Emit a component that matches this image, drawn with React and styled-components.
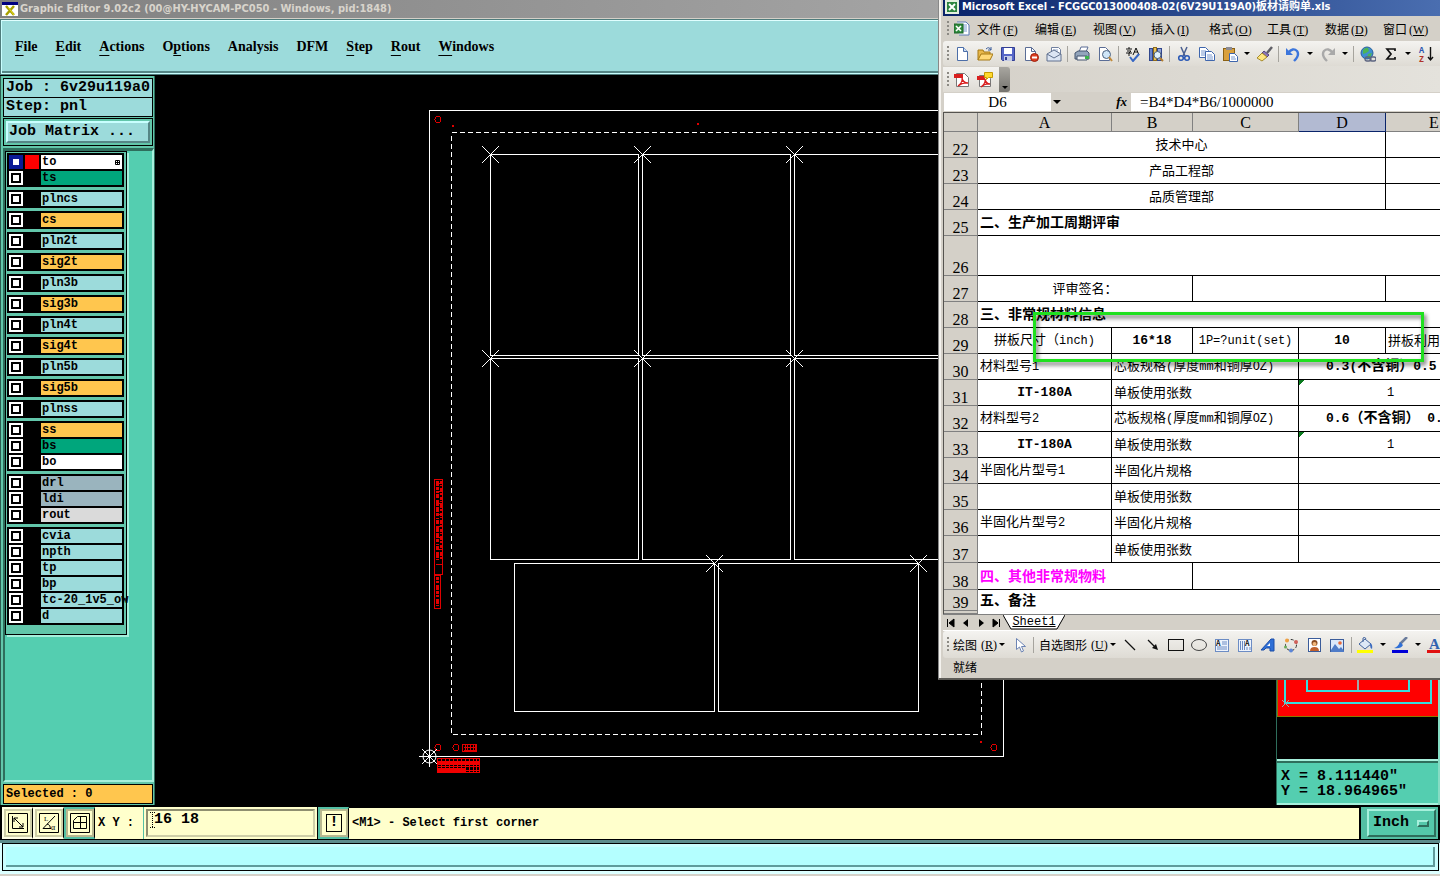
import React, { useState } from 'react';
import styled, { createGlobalStyle, css } from 'styled-components';

const MONO = '"Liberation Mono", "Noto Sans CJK SC", monospace';
const SERIF = '"Liberation Serif", "Noto Sans CJK SC", serif';
const CAPTION = '"DejaVu Sans Condensed", "DejaVu Sans", "Noto Sans CJK SC", sans-serif';
const CJK = '"Noto Sans CJK SC", sans-serif';

const MENUS = [
  { before: '', key: 'F', after: 'ile' },
  { before: '', key: 'E', after: 'dit' },
  { before: '', key: 'A', after: 'ctions' },
  { before: 'O', key: 'p', after: 'tions' },
  { before: 'Analysis', key: '', after: '' },
  { before: 'DFM', key: '', after: '' },
  { before: '', key: 'S', after: 'tep' },
  { before: '', key: 'R', after: 'out' },
  { before: '', key: 'W', after: 'indows' }
];

const AQUA = '#9cdbdb';
const AMBER = '#ffc64e';
const JADE = '#00a67c';
const STEEL = '#9ab4be';

const LAYER_GROUPS = [
  [{ name: 'to', color: '#fff', active: true }, { name: 'ts', color: JADE }],
  [{ name: 'plncs', color: AQUA }],
  [{ name: 'cs', color: AMBER }],
  [{ name: 'pln2t', color: AQUA }],
  [{ name: 'sig2t', color: AMBER }],
  [{ name: 'pln3b', color: AQUA }],
  [{ name: 'sig3b', color: AMBER }],
  [{ name: 'pln4t', color: AQUA }],
  [{ name: 'sig4t', color: AMBER }],
  [{ name: 'pln5b', color: AQUA }],
  [{ name: 'sig5b', color: AMBER }],
  [{ name: 'plnss', color: AQUA }],
  [
    { name: 'ss', color: AMBER },
    { name: 'bs', color: JADE },
    { name: 'bo', color: '#fff' }
  ],
  [
    { name: 'drl', color: STEEL },
    { name: 'ldi', color: STEEL },
    { name: 'rout', color: '#dadada' }
  ],
  [
    { name: 'cvia', color: AQUA },
    { name: 'npth', color: AQUA },
    { name: 'tp', color: AQUA },
    { name: 'bp', color: AQUA },
    { name: 'tc-20_1v5_ow', color: AQUA },
    { name: 'd', color: AQUA }
  ]
];

const EXCEL_MENUS = [
  ['文件', 'F'], ['编辑', 'E'], ['视图', 'V'], ['插入', 'I'],
  ['格式', 'O'], ['工具', 'T'], ['数据', 'D'], ['窗口', 'W']
];

const ROWS = [
  { n: 22, h: 26, cells: [{ span: 4, text: '技术中心', center: true }, {}] },
  { n: 23, h: 26, cells: [{ span: 4, text: '产品工程部', center: true }, {}] },
  { n: 24, h: 26, cells: [{ span: 4, text: '品质管理部', center: true }, {}] },
  { n: 25, h: 26, cells: [{ span: 5, text: '二、生产加工周期评审', bold: true }] },
  { n: 26, h: 40, cells: [{ span: 5 }] },
  { n: 27, h: 26, cells: [{ span: 2, text: '评审签名：', center: true }, { span: 2 }, {}] },
  { n: 28, h: 26, cells: [{ span: 5, text: '三、非常规材料信息', bold: true }] },
  {
    n: 29,
    h: 26,
    cells: [
      { text: '拼板尺寸（inch)', center: true },
      { text: '16*18', center: true, bold: true },
      { text: '1P=?unit(set)', center: true },
      { text: '10', center: true, bold: true },
      { text: '拼板利用' }
    ]
  },
  {
    n: 30,
    h: 26,
    cells: [
      { text: '材料型号1' },
      { span: 2, text: '芯板规格(厚度mm和铜厚OZ)' },
      { span: 2, text: '0.3(不含铜）0.5', bold: true, indent: true }
    ]
  },
  {
    n: 31,
    h: 26,
    cells: [
      { text: 'IT-180A', center: true, bold: true },
      { span: 2, text: '单板使用张数' },
      { span: 2, text: '1', center: true, flag: true }
    ]
  },
  {
    n: 32,
    h: 26,
    cells: [
      { text: '材料型号2' },
      { span: 2, text: '芯板规格(厚度mm和铜厚OZ)' },
      { span: 2, text: '0.6（不含铜） 0.', bold: true, indent: true }
    ]
  },
  {
    n: 33,
    h: 26,
    cells: [
      { text: 'IT-180A', center: true, bold: true },
      { span: 2, text: '单板使用张数' },
      { span: 2, text: '1', center: true, flag: true }
    ]
  },
  { n: 34, h: 26, cells: [{ text: '半固化片型号1' }, { span: 2, text: '半固化片规格' }, { span: 2 }] },
  { n: 35, h: 26, cells: [{}, { span: 2, text: '单板使用张数' }, { span: 2 }] },
  { n: 36, h: 26, cells: [{ text: '半固化片型号2' }, { span: 2, text: '半固化片规格' }, { span: 2 }] },
  { n: 37, h: 27, cells: [{}, { span: 2, text: '单板使用张数' }, { span: 2 }] },
  {
    n: 38,
    h: 27,
    cells: [{ span: 2, text: '四、其他非常规物料', bold: true, color: '#f0f' }, { span: 3 }]
  },
  { n: 39, h: 21, cells: [{ span: 5, text: '五、备注', bold: true, open: true }] }
];

/* 16x16 toolbar drawings */
const ICONS = {
  book: (
    <>
      <path d="M3 1h9l3 3v10H5" fill="#fff" stroke="#5a78b4" />
      <path d="M9 4h4M9 6h4M9 8h4M9 10h4" stroke="#7a9ad0" />
      <rect x="0" y="3" width="9" height="9" fill="#2f8a3c" stroke="#1d6429" />
      <path d="M2 5l5 5M7 5l-5 5" stroke="#fff" strokeWidth="1.6" />
    </>
  ),
  page: (
    <>
      <path d="M3.500 1.500h6l4 4v9h-10z" fill="#fff" stroke="#4c6ea8" />
      <path d="M9.500 1.500v4h4" fill="#c9dcf4" stroke="#4c6ea8" />
    </>
  ),
  open: (
    <>
      <path d="M1 14V4h5l1 2h6v3" fill="#e8b84c" stroke="#a57914" />
      <path d="M1 14l3-6h12l-3 6z" fill="#ffd978" stroke="#a57914" />
      <path d="M9 3q3-3 5 1M14 1v3h-3" fill="none" stroke="#3b5c9a" />
    </>
  ),
  save: (
    <>
      <path d="M1.500 1.500h13v13h-12l-1-1z" fill="#5666c8" stroke="#333f94" />
      <rect x="4" y="2" width="8" height="6" fill="#fff" />
      <rect x="4" y="10" width="8" height="5" fill="#c4cbe6" />
      <rect x="5" y="11" width="2" height="3" fill="#333f94" />
    </>
  ),
  restrict: (
    <>
      <path d="M2.500 1.500h6l4 4v9h-10z" fill="#fff" stroke="#5a6d96" />
      <path d="M8.500 1.500v4h4" fill="none" stroke="#5a6d96" />
      <circle cx="11.500" cy="11.500" r="4" fill="#dc3d20" stroke="#9d200c" />
      <path d="M9 11.500h5" stroke="#fff" strokeWidth="2" />
    </>
  ),
  mail: (
    <>
      <path d="M5.500 1.500h7l2 2v7h-9z" fill="#fff" stroke="#7080a0" />
      <path d="M7 4h5M7 6h5" stroke="#8fa5cb" />
      <path d="M1 8l7-4 7 4v7H1z" fill="#dce5f3" stroke="#61718f" />
      <path d="M1 8l7 4 7-4" fill="none" stroke="#61718f" />
    </>
  ),
  print: (
    <>
      <path d="M5 6l2-5h7l-2 5z" fill="#fff" stroke="#5a6d96" />
      <path d="M1 7l3-2h9l2 2v6H1z" fill="#93a5bc" stroke="#44556e" />
      <path d="M3 10h10v4H3z" fill="#eff3f8" stroke="#44556e" />
      <rect x="11" y="10" width="4" height="3" fill="#3bb54a" />
    </>
  ),
  preview: (
    <>
      <path d="M2.500 1.500h6l4 4v9h-10z" fill="#fff" stroke="#5a6d96" />
      <circle cx="9.500" cy="8.500" r="4" fill="#cfe6f8" stroke="#48607e" />
      <path d="M12 11l3 4" stroke="#c08a3a" strokeWidth="2" />
    </>
  ),
  spell: (
    <>
      <path d="M1 3h6M4 1v2M2 5h4l-2 2v3M1 7h6" fill="none" stroke="#111" />
      <path d="M8 9l3-7 3 7M9 6h4" fill="none" stroke="#111" />
      <path d="M5 11l3 4 6-7" fill="none" stroke="#3767c4" strokeWidth="2" />
    </>
  ),
  research: (
    <>
      <rect x="1.500" y="2.500" width="3" height="12" fill="#6a86cf" stroke="#31478c" />
      <rect x="5.500" y="1.500" width="3" height="13" fill="#ecc45a" stroke="#8c6a1b" />
      <rect x="9.500" y="2.500" width="4" height="12" fill="#8fa3d8" stroke="#31478c" />
      <circle cx="9.500" cy="9" r="3.500" fill="#dff0fb" stroke="#4b5f7a" />
      <path d="M12 12l3 3" stroke="#b47c2c" strokeWidth="2" />
    </>
  ),
  cut: (
    <>
      <path d="M5 1l4 9M11 1l-4 9" stroke="#4a5f90" strokeWidth="1.500" />
      <circle cx="5" cy="12" r="2.300" fill="none" stroke="#2857b5" strokeWidth="1.500" />
      <circle cx="11" cy="12" r="2.300" fill="none" stroke="#2857b5" strokeWidth="1.500" />
    </>
  ),
  copy: (
    <>
      <path d="M.5 1.500h6l3 3v7h-9z" fill="#fff" stroke="#3f66ad" />
      <path d="M2 5h5M2 7h5M2 9h5" stroke="#7a9ad0" />
      <path d="M6.500 5.500h6l3 3v6h-9z" fill="#fff" stroke="#3f66ad" />
      <path d="M8 9h5M8 11h6M8 13h6" stroke="#7a9ad0" />
    </>
  ),
  paste: (
    <>
      <rect x="1.500" y="2.500" width="11" height="12" fill="#d9a03c" stroke="#8a6114" />
      <rect x="4" y="1" width="6" height="3" fill="#8c8c94" />
      <path d="M7.500 7.500h5l3 3v5h-8z" fill="#fff" stroke="#3f66ad" />
      <path d="M9 11h4M9 13h5" stroke="#7a9ad0" />
    </>
  ),
  brush: (
    <>
      <path d="M15 1l-5 6" stroke="#5f5f66" strokeWidth="2.500" />
      <path d="M7 5l5 4-2 2-5-4z" fill="#8c78b8" stroke="#55447f" />
      <path d="M5 7l5 4-5 4-5-3z" fill="#ffe680" stroke="#a58a2b" />
    </>
  ),
  undo: (
    <>
      <path d="M3 7q5-6 9-2 3 4-3 10" fill="none" stroke="#3c76dc" strokeWidth="2.400" />
      <path d="M1 2v7h7z" fill="#3c76dc" />
    </>
  ),
  redo: (
    <>
      <path d="M13 7q-5-6-9-2-3 4 3 10" fill="none" stroke="#a9a9a9" strokeWidth="2.400" />
      <path d="M15 2v7H8z" fill="#a9a9a9" />
    </>
  ),
  globe: (
    <>
      <circle cx="7" cy="7" r="6" fill="#3f8fd0" stroke="#28609c" />
      <path d="M3 4q3-3 5-2l1 3-3 2-3 1zM8 8l4-1-2 5-3 0z" fill="#4db554" />
      <rect x="5" y="11" width="6" height="4" rx="2" fill="none" stroke="#5c6480" strokeWidth="1.300" />
      <rect x="10" y="11" width="6" height="4" rx="2" fill="none" stroke="#5c6480" strokeWidth="1.300" />
    </>
  ),
  sum: <path d="M12 5V3H4l4 5-4 5h8v-2" fill="none" stroke="#111" strokeWidth="1.700" />,
  sort: (
    <>
      <text x="1" y="7" fontSize="8" fontWeight="bold" fill="#2b55b0">A</text>
      <text x="1" y="16" fontSize="8" fontWeight="bold" fill="#b03228">Z</text>
      <path d="M12.500 1v13M10 11l2.500 3 2.500-3" fill="none" stroke="#111" strokeWidth="1.400" />
    </>
  ),
  pdf: (
    <>
      <path d="M2.500 1.500h8l4 4v9h-12z" fill="#fff" stroke="#777" />
      <path d="M0 2h9v4H0z" fill="#d91f1f" />
      <path d="M4 14q5-4 4-8 1 5 6 5-5-1-10 3" fill="none" stroke="#d91f1f" strokeWidth="1.300" />
    </>
  ),
  pdfNote: (
    <>
      <path d="M2.500 3.500h8l3 3v8h-11z" fill="#fff" stroke="#777" />
      <path d="M0 4h8v4H0z" fill="#d91f1f" />
      <path d="M4 15q5-4 4-8 1 5 5 5-5-1-9 3" fill="none" stroke="#d91f1f" strokeWidth="1.300" />
      <path d="M7.500.5h8v5h-4l-2 2v-2h-2z" fill="#ffd92e" stroke="#c49a00" />
    </>
  ),
  pointer: <path d="M4.500 1.500v11l3-2.500 2 5 2-1-2-4.500h4z" fill="#fff" stroke="#6c84b4" />,
  line: <path d="M3 3l10 10" stroke="#111" strokeWidth="1.200" />,
  arrow: (
    <>
      <path d="M3 3l8 8" stroke="#111" strokeWidth="1.200" />
      <path d="M13 13l-6-2 4-4z" fill="#111" />
    </>
  ),
  rect: <rect x=".5" y="2.500" width="15" height="11" fill="none" stroke="#111" />,
  ellipse: <ellipse cx="8" cy="8" rx="7.500" ry="5.500" fill="none" stroke="#444" />,
  textBox: (
    <>
      <rect x="1.500" y="2.500" width="13" height="12" fill="#eef3fc" stroke="#6c8cc4" />
      <text x="2" y="9" fontSize="7" fontWeight="bold" fill="#111">A</text>
      <path d="M8 5h5M8 7h5M3 10h10M3 12h10" stroke="#6c8cc4" />
    </>
  ),
  verticalText: (
    <>
      <rect x="1.500" y="2.500" width="13" height="12" fill="#eef3fc" stroke="#6c8cc4" />
      <path d="M3.500 4v9M5.500 4v9M7.500 4v9M10 10v3M13 10v3" stroke="#6c8cc4" />
      <text x="8" y="9" fontSize="7" fontWeight="bold" fill="#111">A</text>
    </>
  ),
  wordArt: (
    <>
      <path d="M1 13L11 2h3v12h-4v-3H6l-2 2z" fill="#2f6fd6" stroke="#1c4ea8" />
      <path d="M7 9l3-3v3z" fill="#fff" />
    </>
  ),
  diagram: (
    <>
      <circle cx="8" cy="8" r="5.500" fill="none" stroke="#333" strokeDasharray="3 2" />
      <circle cx="4" cy="3.500" r="2" fill="#f0a040" />
      <circle cx="13" cy="5" r="2" fill="#d0605a" />
      <circle cx="8" cy="13.500" r="2" fill="#5c86d8" />
      <circle cx="2.500" cy="10" r="1.500" fill="#69ad5b" />
    </>
  ),
  clip: (
    <>
      <rect x="2.500" y="1.500" width="12" height="13" fill="#fff" stroke="#3b5c9a" />
      <circle cx="8.500" cy="6" r="3" fill="#8a4b20" />
      <circle cx="8.500" cy="7" r="2" fill="#f2b77a" />
      <path d="M4 14q0-4 4.500-4t4.500 4z" fill="#c0602c" />
    </>
  ),
  picture: (
    <>
      <rect x="1.500" y="2.500" width="13" height="12" fill="#dbe8fa" stroke="#3b5c9a" />
      <circle cx="11" cy="6" r="1.800" fill="#e86838" />
      <path d="M2 13l4-6 4 5 2-2 3 4v1H2z" fill="#4f7cc8" />
    </>
  ),
  fill: (
    <>
      <path d="M2 7l6-5 6 5-6 5z" fill="#dde8f6" stroke="#41639d" />
      <path d="M6 5V1q2-2 3 1" fill="none" stroke="#41639d" />
      <path d="M13 6q3 1 2 6-2-1-2-4z" fill="#3c6cc0" />
      <path d="M0 13h16v3H0z" fill="#ff0" />
    </>
  ),
  stroke: (
    <>
      <path d="M15 0L8 7" stroke="#6b7c9c" strokeWidth="2.500" />
      <path d="M8 5l3 3q-2 4-9 3 4-1 6-6z" fill="#2f6fd6" />
      <path d="M0 13h16v3H0z" fill="#0000d8" />
    </>
  ),
  fontColor: (
    <>
      <text x="2" y="12" fontSize="15" fontWeight="bold" fontFamily="Liberation Serif, serif" fill="#2f62b0">A</text>
      <path d="M0 13h16v3H0z" fill="#e01010" />
    </>
  )
};

const TOOLBAR = [
  'page', 'open', 'save', 'restrict', 'mail', '|', 'print', 'preview', '|', 'spell', 'research', '|',
  'cut', 'copy', 'paste', 'v', 'brush', '|', 'undo', 'v', 'redo', 'v', '|', 'globe', 'sum', 'v', 'sort'
];
const DRAW_SHAPES = [
  'line', 'arrow', 'rect', 'ellipse', 'textBox', 'verticalText', 'wordArt', 'diagram', 'clip', 'picture',
  '|', 'fill', 'v', 'stroke', 'v', 'fontColor'
];

const Tools = ({ items }) =>
  items.map((item, i) => {
    if (item === '|') return <Separator key={i} />;
    if (item === 'v') {
      return (
        <DropButton key={i} type="button" aria-label={`${items[i - 1]} options`}>
          <Caret />
        </DropButton>
      );
    }
    return (
      <ToolButton key={i} type="button" aria-label={item}>
        <Icon name={item} />
      </ToolButton>
    );
  });

const Icon = ({ name }) => (
  <svg width="16" height="16" viewBox="0 0 16 16" aria-hidden="true">
    {ICONS[name]}
  </svg>
);

const Cross = ({ x, y }) => (
  <path d={`M${x - 8} ${y - 8}l17 17M${x + 9} ${y - 8}l-17 17`} stroke="#fff" shapeRendering="crispEdges" />
);

const PanelDrawing = () => (
  <CanvasSvg role="img" aria-label="Panel layout">
    <g transform="translate(-155 -76)" fill="none" stroke="#fff" shapeRendering="crispEdges">
      <rect x="429.500" y="110.500" width="574" height="646" />
      <rect x="451.500" y="132.500" width="530" height="602" strokeDasharray="5 3" />
      {[490, 642, 794].map((x) => (
        <React.Fragment key={x}>
          <rect x={x + 0.5} y="154.500" width="148" height="201" />
          <rect x={x + 0.5} y="358.500" width="148" height="201" />
          <Cross x={x} y={154} />
          <Cross x={x} y={358} />
        </React.Fragment>
      ))}
      {[514, 718].map((x) => (
        <React.Fragment key={x}>
          <rect x={x + 0.5} y="563.500" width="200" height="148" />
          <Cross x={x + 200} y={563} />
        </React.Fragment>
      ))}
      <g stroke="#e00000">
        <circle cx="438" cy="119.500" r="3" />
        <circle cx="438" cy="747.500" r="3" />
        <circle cx="456" cy="747.500" r="3" />
        <circle cx="994" cy="747.500" r="3" />
        <path d="M452 126h2M697 124h2M980 742h2" strokeWidth="2" />
        <rect x="462.500" y="744.500" width="14" height="7" />
        <path d="M464 747h12M464 750h12M465.500 745v6M467.500 745v6M470.500 745v6M473.500 745v6M475.500 745v6" />
        <rect x="434.500" y="479.500" width="8" height="95" />
        <rect x="434.500" y="575.500" width="6" height="33" />
        <path d="M437.500 481v79" strokeWidth="3" strokeDasharray="5 1 3 2 1 1 4 2 6 1" />
        <path d="M440.500 481v79" strokeWidth="2" strokeDasharray="3 1 1 2 4 1 2 2" />
        <path d="M436 483h6M436 491h6M436 503h6M436 514h6M436 526h6M436 537h6M436 549h6M436 564h6" />
        <path d="M437.500 577v29" strokeWidth="3" strokeDasharray="3 1 2 2 5 1" />
      </g>
      <g stroke="#f00000">
        <rect x="437.500" y="758.500" width="42" height="14" />
        <path d="M438 762.500h41M438 769.500h27" strokeWidth="4" />
        <path d="M438 766.500h41M438 770.500h41M441.500 758v14M445.500 758v14M449.500 758v14M453.500 758v14M457.500 758v14M461.500 758v14M465.500 758v14M469.500 758v14M473.500 758v14M476.500 758v14" />
      </g>
      <circle cx="429.500" cy="756.500" r="6.500" shapeRendering="auto" />
      <path d="M419 756.500h20M429.500 747v20M422 749l15 15M437 749l-15 15" />
    </g>
  </CanvasSvg>
);

const Overview = () => (
  <OverviewPane>
    <OverviewMap>
      <svg width="161" height="162" aria-hidden="true" shapeRendering="crispEdges">
        <path d="M0 0h161v120H0z" fill="#f00" />
        <path d="M.5 0v119.500H161" fill="none" stroke="#8a7a00" />
        <path d="M30 0v94h102V0M8 0v106h146V0" fill="none" stroke="#38dede" strokeWidth="2" />
        <path d="M81 0v93" stroke="#a0a8a8" strokeWidth="2" />
        <path d="M5 103l7 7M12 103l-7 7" stroke="#a0a8a8" />
      </svg>
    </OverviewMap>
    <Coordinates>
      <div>X = 8.111440"</div>
      <div>Y = 18.964965"</div>
    </Coordinates>
  </OverviewPane>
);

// Half-width characters sit in a smaller fixed-pitch face beside the ideographs
const CellText = ({ text, bold }) =>
  text.split(/([\x20-\x7e]+)/).map((part, i) =>
    i % 2 ? <Latin key={i} $bold={bold}>{part}</Latin> : part
  );

const ExcelWindow = () => (
  <ExcelFrame>
    <ExcelTitle>
      <svg width="14" height="14" viewBox="0 0 14 14" aria-hidden="true">
        <rect width="14" height="14" fill="#e4f0e0" />
        <rect x="2" y="2" width="10" height="10" fill="#2c8540" />
        <path d="M4 4l6 6M10 4l-6 6" stroke="#fff" strokeWidth="2" />
      </svg>
      <span>Microsoft Excel - FCGGC013000408-02(6V29U119A0)板材请购单.xls</span>
    </ExcelTitle>
    <ExcelMenu>
      <Grip />
      <ToolButton type="button" aria-label="Workbook"><Icon name="book" /></ToolButton>
      {EXCEL_MENUS.map(([label, key]) => (
        <ExcelMenuItem key={key} type="button">
          {label}<Hotkey>(<u>{key}</u>)</Hotkey>
        </ExcelMenuItem>
      ))}
    </ExcelMenu>
    <ToolRow>
      <Grip />
      <Tools items={TOOLBAR} />
    </ToolRow>
    <PdfRow>
      <PdfTools>
        <Grip />
        <Tools items={['pdf', 'pdfNote']} />
      </PdfTools>
      <MoreButton type="button" aria-label="Toolbar options"><Caret /></MoreButton>
    </PdfRow>
    <FormulaRow>
      <NameBox aria-label="Name box" defaultValue="D6" />
      <DropButton type="button" aria-label="Names"><Caret $large /></DropButton>
      <FxLabel htmlFor="formula">fx</FxLabel>
      <FormulaInput id="formula" defaultValue="=B4*D4*B6/1000000" />
    </FormulaRow>
    <SheetArea>
      <Sheet>
        <colgroup>
          <SheetCol $w={34} />
          <SheetCol $w={134} />
          <SheetCol $w={81} />
          <SheetCol $w={106} />
          <SheetCol $w={87} />
          <SheetCol $w={97} />
        </colgroup>
        <thead>
          <tr>
            <ColumnHead aria-label="Select all" />
            {['A', 'B', 'C', 'D', 'E'].map((c) => (
              <ColumnHead key={c} $selected={c === 'D'}>{c}</ColumnHead>
            ))}
          </tr>
        </thead>
        <tbody>
          {ROWS.map((row) => (
            <SheetRow key={row.n} $h={row.h}>
              <RowHead scope="row">{row.n}</RowHead>
              {row.cells.map((cell, i) => (
                <Cell
                  key={i}
                  colSpan={cell.span || 1}
                  $center={cell.center}
                  $bold={cell.bold}
                  $color={cell.color}
                  $indent={cell.indent}
                  $flag={cell.flag}
                  $open={cell.open}
                >
                  {cell.text && <CellText text={cell.text} bold={cell.bold} />}
                </Cell>
              ))}
            </SheetRow>
          ))}
          <SheetRow $h={3}>
            <RowHead aria-label="40" />
            <Cell colSpan={5} $open />
          </SheetRow>
        </tbody>
      </Sheet>
    </SheetArea>
    <SheetTabs>
      {['M1.500 1v8M8 1v8L3 5z', 'M7 1v8L2 5z', 'M3 1v8l5-4z', 'M2 1v8l5-4zM8.500 1v8'].map((d, i) => (
        <TabArrow key={d} type="button" aria-label={['First', 'Previous', 'Next', 'Last'][i]}>
          <svg width="10" height="10" viewBox="0 0 10 10">
            <path d={d} fill="#000" stroke="#000" strokeWidth={i % 3 ? 0 : 1} />
          </svg>
        </TabArrow>
      ))}
      <SheetTab>
        <svg width="62" height="15" aria-hidden="true">
          <path d="M0 0h62l-8 14H8z" fill="#fff" />
          <path d="M0 0l8 14h46l8-14" fill="none" stroke="#000" />
        </svg>
        <TabLink href="#sheet1">Sheet1</TabLink>
      </SheetTab>
    </SheetTabs>
    <DrawRow>
      <Grip />
      <DrawMenu type="button">绘图<Hotkey>(<u>R</u>)</Hotkey><Caret /></DrawMenu>
      <ToolButton type="button" aria-label="pointer"><Icon name="pointer" /></ToolButton>
      <Separator />
      <DrawMenu type="button">自选图形<Hotkey>(<u>U</u>)</Hotkey><Caret /></DrawMenu>
      <Tools items={DRAW_SHAPES} />
    </DrawRow>
    <ExcelStatus>就绪</ExcelStatus>
    <Highlight />
  </ExcelFrame>
);

const App = () => {
  const [xy, setXy] = useState('16 18');

  return (
    <Desktop>
      <GlobalStyle />
      <TitleBar>
        <svg width="16" height="14" viewBox="0 0 16 14" aria-hidden="true">
          <rect width="16" height="14" fill="#fff" />
          <rect width="16" height="3" fill="#000080" />
          <path d="M4 4l8 9M12 4l-8 9" stroke="#a8a000" strokeWidth="2.500" />
          <path d="M6 5l6 8" stroke="#e8dc20" />
        </svg>
        <span>Graphic Editor 9.02c2 (00@HY-HYCAM-PC050 - Windows, pid:1848)</span>
      </TitleBar>
      <MenuBar>
        {MENUS.map((menu) => (
          <MenuButton key={menu.before + menu.key} type="button">
            {menu.before}{menu.key && <u>{menu.key}</u>}{menu.after}
          </MenuButton>
        ))}
      </MenuBar>

      <Workspace>
        <Sidebar>
          <JobInfo>
            <JobLine>Job : 6v29u119a0</JobLine>
            <JobLine>Step: pnl</JobLine>
          </JobInfo>
          <MatrixFrame>
            <MatrixButton type="button">Job Matrix ...</MatrixButton>
          </MatrixFrame>
          <LayerWell>
            <LayerPanel>
              {LAYER_GROUPS.map((group) => (
                <LayerGroup key={group[0].name}>
                  {group.map((layer) => (
                    <LayerRow key={layer.name}>
                      <LayerCheck id={`layer-${layer.name}`} type="checkbox" $active={layer.active} />
                      <Swatch $active={layer.active} />
                      <LayerName htmlFor={`layer-${layer.name}`} $color={layer.color}>
                        {layer.name}
                        {layer.active && (
                          <svg width="5" height="5" viewBox="0 0 5 5" aria-hidden="true">
                            <path d="M.5.5h4v4h-4zM2.500 0v5M0 2.500h5" fill="none" stroke="#000" />
                          </svg>
                        )}
                      </LayerName>
                    </LayerRow>
                  ))}
                </LayerGroup>
              ))}
            </LayerPanel>
          </LayerWell>
          <SelectedCount>Selected : 0</SelectedCount>
        </Sidebar>
        <Canvas>
          <PanelDrawing />
        </Canvas>
        <Overview />
      </Workspace>

      <CommandBar>
        <ModeButton type="button" aria-label="Distance mode">
          <svg width="20" height="20" aria-hidden="true">
            <path d="M.5.5h19v19H.5zM4.500 3v12.500H16M6 5l9 9M6 9V5h4M15 10v4h-4" fill="none" stroke="#000" />
          </svg>
        </ModeButton>
        <ModeButton type="button" aria-label="Angle mode">
          <svg width="20" height="20" aria-hidden="true">
            <path d="M.5.5h19v19H.5zM16 3L4 15.500h8M8 11q4 1 3 5" fill="none" stroke="#000" />
            <text x="5" y="8" fontSize="7">L</text>
            <text x="12" y="17" fontSize="8">α</text>
          </svg>
        </ModeButton>
        <ModeButton type="button" aria-label="Grid mode" $on>
          <svg width="20" height="20" aria-hidden="true">
            <path d="M.5.5h19v19H.5zM3.500 7.500l4-4h9v12h-13zM3.500 9.500h13M10.500 3v13" fill="none" stroke="#000" />
          </svg>
        </ModeButton>
        <XyLabel htmlFor="xy">X Y :</XyLabel>
        <XyField>
          <XyInput id="xy" value={xy} onChange={(e) => setXy(e.target.value)} />
          <IBeam width="5" height="16" aria-hidden="true">
            <path d="M2.500 0v16M0 .5h5M0 15.500h5" fill="none" stroke="#000" strokeDasharray="1 1" />
          </IBeam>
        </XyField>
        <ModeButton type="button" aria-label="Alert" $on>
          <AlertMark>!</AlertMark>
        </ModeButton>
        <Prompt>&lt;M1&gt; - Select first corner</Prompt>
        <UnitFrame>
          <UnitSelect aria-label="Units" defaultValue="Inch">
            <option>Inch</option>
          </UnitSelect>
          <UnitMark />
        </UnitFrame>
      </CommandBar>
      <MessageBar>
        <MessageLine />
      </MessageBar>

      <ExcelWindow />
    </Desktop>
  );
};

const GlobalStyle = createGlobalStyle`
  * {
    box-sizing: border-box;
  }

  body {
    margin: 0;
    background: #000;
    color: #000;
  }

  button, input, select {
    margin: 0;
    padding: 0;
    border: 0;
    border-radius: 0;
    background: none;
    color: inherit;
    font: inherit;
    outline: none;
  }

  svg {
    display: block;
    flex: none;
  }
`;

const Desktop = styled.div`
  position: relative;
  display: flex;
  flex-direction: column;
  min-height: 100vh;
  overflow: hidden;
  background: #000;
`;

const TitleBar = styled.header`
  display: flex;
  align-items: center;
  gap: 2px;
  height: 19px;
  padding-left: 2px;
  border-bottom: 1px solid #d4d0c8;
  background: linear-gradient(90deg, #808080, #b8b8b8);
  color: #d8d4cc;
  font: bold 11px/18px ${CAPTION};
  white-space: nowrap;
`;

const MenuBar = styled.nav`
  display: flex;
  align-items: center;
  gap: 18px;
  height: 56px;
  padding: 0 13px;
  border: 2px solid #c8ffff;
  border-top-color: #e0ffff;
  outline: 1px solid #4f7c7c;
  outline-offset: -1px;
  background: ${AQUA};
  box-shadow: inset 0 -2px 0 #558686;
`;

const MenuButton = styled.button`
  font: bold 14px/20px ${SERIF};

  u {
    text-underline-offset: 4px;
  }
`;

const Workspace = styled.main`
  display: flex;
  flex: 1;
  padding: 1px 0 2px;
  background: #000;
`;

const Sidebar = styled.aside`
  display: flex;
  flex-direction: column;
  flex: none;
  width: 155px;
  padding: 2px 1px 1px 2px;
  border-left: 1px solid #2c5c50;
  border-right: 1px solid #2f6f5f;
  background: #62c6aa;
`;

const JobInfo = styled.div`
  border: 1px solid #000;
  background: ${AQUA};
  font: bold 15px/18px ${MONO};
`;

const JobLine = styled.div`
  padding-left: 2px;
  white-space: pre;

  & + & {
    border-top: 1px solid #000;
  }
`;

const MatrixFrame = styled.div`
  margin-top: 1px;
  padding: 2px;
  border: 1px solid #000;
`;

const MatrixButton = styled.button`
  display: block;
  width: 100%;
  height: 22px;
  padding-left: 1px;
  border: 2px solid;
  border-color: #c8ffff #558686 #558686 #c8ffff;
  background: ${AQUA};
  font: bold 15px/18px ${MONO};
  text-align: left;
`;

const LayerWell = styled.div`
  flex: 1;
  margin: 2px -1px 2px 0;
  border-style: solid;
  border-width: 3px 2px 2px 2px;
  border-color: #2e6e5c #a6f0dc #a6f0dc #2e6e5c;
  background: #54ceb0;
`;

const LayerPanel = styled.div`
  display: flex;
  flex-direction: column;
  gap: 3px;
  width: 122px;
  padding: 1px 2px 9px 1px;
  border: 1px solid #000;
  box-shadow: 2px 2px 0 #a6f0dc;
  background: #62c6aa;
`;

const LayerGroup = styled.div`
  display: flex;
  flex-direction: column;
  gap: 2px;
  padding: 2px;
  background: #000;
`;

const LayerRow = styled.div`
  display: grid;
  grid-template-columns: 14px 14px 1fr;
  gap: 2px;
  height: 14px;
`;

const LayerCheck = styled.input`
  appearance: none;
  width: 14px;
  height: 14px;
  border: 2px solid ${({ $active }) => ($active ? '#0a1a96' : '#fff')};
  background: #fff;
  box-shadow: inset 0 0 0 2px ${({ $active }) => ($active ? '#0a1a96' : '#000')};
`;

const Swatch = styled.span`
  background: ${({ $active }) => ($active ? '#f00' : '#000')};
`;

const LayerName = styled.label`
  display: flex;
  align-items: center;
  justify-content: space-between;
  min-width: 0;
  padding: 0 2px 0 1px;
  background: ${({ $color }) => $color};
  font: bold 12px/14px ${MONO};
  white-space: nowrap;
`;

const SelectedCount = styled.div`
  height: 20px;
  padding-left: 2px;
  border: 1px solid #000;
  background: ${AMBER};
  font: bold 12px/18px ${MONO};
`;

const Canvas = styled.section`
  flex: 1;
  min-width: 0;
`;

const CanvasSvg = styled.svg`
  width: 100%;
  height: 100%;
`;

const OverviewPane = styled.aside`
  display: flex;
  flex-direction: column;
  flex: none;
  width: 164px;
  border-left: 1px solid #2e6e5c;
  border-right: 2px solid #86dcc4;
`;

const OverviewMap = styled.div`
  display: flex;
  flex: 1;
  align-items: flex-end;
  border-bottom: 2px solid #a6f0dc;
`;

const Coordinates = styled.div`
  height: 44px;
  padding: 6px 4px;
  border-top: 2px solid #2e6e5c;
  border-bottom: 2px solid #a6f0dc;
  background: #54ceb0;
  font: bold 15px/15px ${MONO};
  white-space: pre;
`;

const CommandBar = styled.div`
  display: flex;
  height: 33px;
  padding: 0 2px;
  border-bottom: 1px solid #000;
  background: #000;
`;

const ModeButton = styled.button`
  display: flex;
  flex: none;
  align-items: center;
  justify-content: center;
  width: 31px;
  border: 2px solid ${({ $on }) => ($on ? '#54bfa4' : '#ffffe4')};
  border-right: 1px solid #000;
  background: #ffffcc;
  box-shadow: inset 0 0 0 2px ${({ $on }) => ($on ? '#b8b890' : '#cfcfa8')};
`;

const XyLabel = styled.label`
  flex: none;
  width: 49px;
  padding-left: 3px;
  border-right: 1px solid #54bfa4;
  background: #ffffcc;
  font: bold 12px/32px ${MONO};
  white-space: pre;
`;

const XyField = styled.div`
  position: relative;
  flex: none;
  width: 173px;
  margin-right: 1px;
  padding: 2px;
  background: #ffffcc;
`;

const XyInput = styled.input`
  display: block;
  width: 100%;
  height: 28px;
  padding: 0 6px 8px;
  border: 2px solid;
  border-color: #8f8f70 #cfcfa8 #cfcfa8 #8f8f70;
  font: bold 15px/15px ${MONO};
`;

const IBeam = styled.svg`
  position: absolute;
  top: 5px;
  left: 6px;
  pointer-events: none;
`;

const AlertMark = styled.span`
  width: 16px;
  height: 18px;
  border: 1px solid #000;
  font: bold 15px/16px ${MONO};
`;

const Prompt = styled.div`
  flex: 1;
  margin: 1px 2px 0 0;
  padding-left: 3px;
  background: #ffffcc;
  font: bold 12px/31px ${MONO};
`;

const UnitFrame = styled.div`
  position: relative;
  flex: none;
  width: 77px;
  padding: 2px 2px 2px 6px;
  background: #54bfa4;
`;

const UnitSelect = styled.select`
  appearance: none;
  width: 100%;
  height: 28px;
  padding-left: 4px;
  border: 2px solid;
  border-color: #a6f0dc #2e6e5c #2e6e5c #a6f0dc;
  background: #54c8aa;
  font: bold 15px/20px ${MONO};
`;

const UnitMark = styled.span`
  position: absolute;
  top: 13px;
  right: 9px;
  width: 12px;
  height: 7px;
  border: 2px solid;
  border-color: #a6f0dc #2e6e5c #2e6e5c #a6f0dc;
  pointer-events: none;
`;

const MessageBar = styled.footer`
  height: 36px;
  padding: 0 1px 0 2px;
  border-top: 3px solid #5c8c8c;
  border-bottom: 2px solid #d4d0c8;
  background: #dcffff;
`;

const MessageLine = styled.div`
  height: 28px;
  border: 1px solid #000;
  background: #b4ffff;
  box-shadow: inset 3px 3px 0 #c8ffff, inset -3px -3px 0 #c8ffff, inset -5px -5px 0 #5f9c9c;
`;

const ExcelFrame = styled.section`
  position: absolute;
  top: 0;
  left: 938px;
  right: 0;
  overflow: hidden;
  padding-left: 4px;
  border-left: 1px solid #888;
  border-bottom: 2px solid #5c5a56;
  background: #d4d0c8;
  box-shadow: inset 2px 0 0 #f4f2ee;
  font: 12px/16px ${CJK};
`;

const ExcelTitle = styled.header`
  display: flex;
  align-items: center;
  gap: 3px;
  height: 16px;
  padding: 0 0 2px 2px;
  background: linear-gradient(90deg, #0a246a, #4a6eb0);
  color: #fff;
  font: bold 11px/14px ${CAPTION};
  white-space: nowrap;
`;

const ExcelMenu = styled.nav`
  display: flex;
  align-items: center;
  height: 25px;
`;

const ToolButton = styled.button`
  display: flex;
  flex: none;
  align-items: center;
  justify-content: center;
  width: 23px;
  height: 22px;
`;

const ExcelMenuItem = styled.button`
  flex: none;
  width: 58px;
  padding-left: 4px;
  text-align: left;
  white-space: nowrap;
`;

const Hotkey = styled.span`
  margin-left: 2px;
  font: 12px/12px ${SERIF};
`;

const Grip = styled.span`
  flex: none;
  width: 2px;
  height: 16px;
  margin: 0 1px 0 4px;
  background: repeating-linear-gradient(#8c8a84 0 2px, transparent 2px 4px);
`;

const barFace = css`
  display: flex;
  align-items: center;
  height: 25px;
  background: linear-gradient(#f4f3f0, #dedbd4);
`;

const ToolRow = styled.div`
  ${barFace}
  border-radius: 3px 0 0 3px;
`;

const PdfRow = styled.div`
  display: flex;
  height: 26px;
  padding-top: 1px;
  background: linear-gradient(90deg, #d4d0c8, #e4e2dc);
`;

const PdfTools = styled.div`
  ${barFace}
  width: 56px;
`;

const MoreButton = styled.button`
  display: flex;
  align-items: flex-end;
  justify-content: center;
  width: 11px;
  height: 25px;
  padding-bottom: 3px;
  border-radius: 0 3px 3px 0;
  background: linear-gradient(#a8a6a0, #75736e);
`;

const Separator = styled.span`
  flex: none;
  width: 1px;
  height: 16px;
  margin: 0 2px;
  background: #a6a49e;
`;

const DropButton = styled.button`
  display: flex;
  flex: none;
  align-items: center;
  justify-content: center;
  width: 12px;
  height: 18px;
`;

const Caret = styled.span`
  flex: none;
  border: ${({ $large }) => ($large ? '4px' : '3px')} solid transparent;
  border-top-color: #000;
  border-bottom-width: 0;
`;

const FormulaRow = styled.div`
  display: flex;
  align-items: center;
  height: 20px;
  background: #d4d0c8;
`;

const NameBox = styled.input`
  width: 107px;
  height: 18px;
  margin-left: 1px;
  background: #fff;
  font: 15px/18px ${SERIF};
  text-align: center;
`;

const FxLabel = styled.label`
  width: 68px;
  padding-right: 4px;
  font: italic bold 13px/18px ${SERIF};
  text-align: right;
`;

const FormulaInput = styled.input`
  flex: 1;
  min-width: 0;
  height: 18px;
  padding-left: 9px;
  background: #fff;
  font: 15px/18px ${SERIF};
`;

const SheetArea = styled.div`
  overflow: hidden;
  border-top: 1px solid #55534f;
  border-left: 1px solid #55534f;
  background: #fff;
`;

const Sheet = styled.table`
  width: 539px;
  border-spacing: 0;
  table-layout: fixed;
`;

const SheetCol = styled.col`
  width: ${({ $w }) => $w}px;
`;

const ColumnHead = styled.th`
  height: 19px;
  padding: 2px 0 0;
  border-right: 1px solid ${({ $selected }) => ($selected ? '#0a246a' : '#808080')};
  border-bottom: 1px solid ${({ $selected }) => ($selected ? '#0a246a' : '#808080')};
  background: ${({ $selected }) => ($selected ? '#b2bad2' : '#d4d0c8')};
  font: 16px/16px ${SERIF};
`;

const SheetRow = styled.tr`
  height: ${({ $h }) => $h}px;
`;

const RowHead = styled.th`
  padding: 0;
  border-right: 1px solid #808080;
  border-bottom: 1px solid #808080;
  background: #d4d0c8;
  font: 16px/14px ${SERIF};
  vertical-align: bottom;
`;

const Cell = styled.td`
  padding: 0 0 ${({ $bold }) => ($bold ? '3px' : '1px')}
    ${({ $center, $indent }) => ($indent ? '27px' : $center ? 0 : '2px')};
  border-right: 1px solid #000;
  border-bottom: 1px solid ${({ $open }) => ($open ? '#fff' : '#000')};
  background: ${({ $flag }) =>
    $flag ? 'linear-gradient(135deg, #0a7a1e 4px, #fff 4px)' : '#fff'};
  color: ${({ $color }) => $color || '#000'};
  font: ${({ $bold }) => ($bold ? 'bold 14px' : '13px')}/16px ${CJK};
  text-align: ${({ $center }) => ($center ? 'center' : 'left')};
  white-space: nowrap;

  &:empty {
    padding: 0;
  }
`;

const Latin = styled.span`
  font-family: ${MONO};
  font-size: ${({ $bold }) => ($bold ? '13px' : '12px')};
`;

const SheetTabs = styled.div`
  display: flex;
  align-items: center;
  height: 17px;
  border-top: 1px solid #808080;
  border-bottom: 1px solid #fff;
`;

const TabArrow = styled.button`
  display: flex;
  align-items: center;
  justify-content: center;
  width: 15px;
  height: 15px;
`;

const SheetTab = styled.div`
  display: grid;
  align-self: flex-start;

  & > * {
    grid-area: 1 / 1;
  }
`;

const TabLink = styled.a`
  color: #000;
  font: 12px/15px ${MONO};
  text-align: center;
`;

const DrawRow = styled.div`
  ${barFace}
  height: 27px;
  border-radius: 3px 0 0 3px;
`;

const DrawMenu = styled.button`
  display: flex;
  flex: none;
  align-items: center;
  gap: 2px;
  padding: 0 3px;
  white-space: nowrap;
`;

const ExcelStatus = styled.div`
  height: 20px;
  padding-left: 10px;
  line-height: 18px;
`;

const Highlight = styled.div`
  position: absolute;
  top: 312px;
  left: 94px;
  width: 391px;
  height: 50px;
  border: 3px solid #1fe01f;
  filter: drop-shadow(2px 3px 2px rgba(0, 0, 0, 0.6));
  pointer-events: none;
`;

export default App;
